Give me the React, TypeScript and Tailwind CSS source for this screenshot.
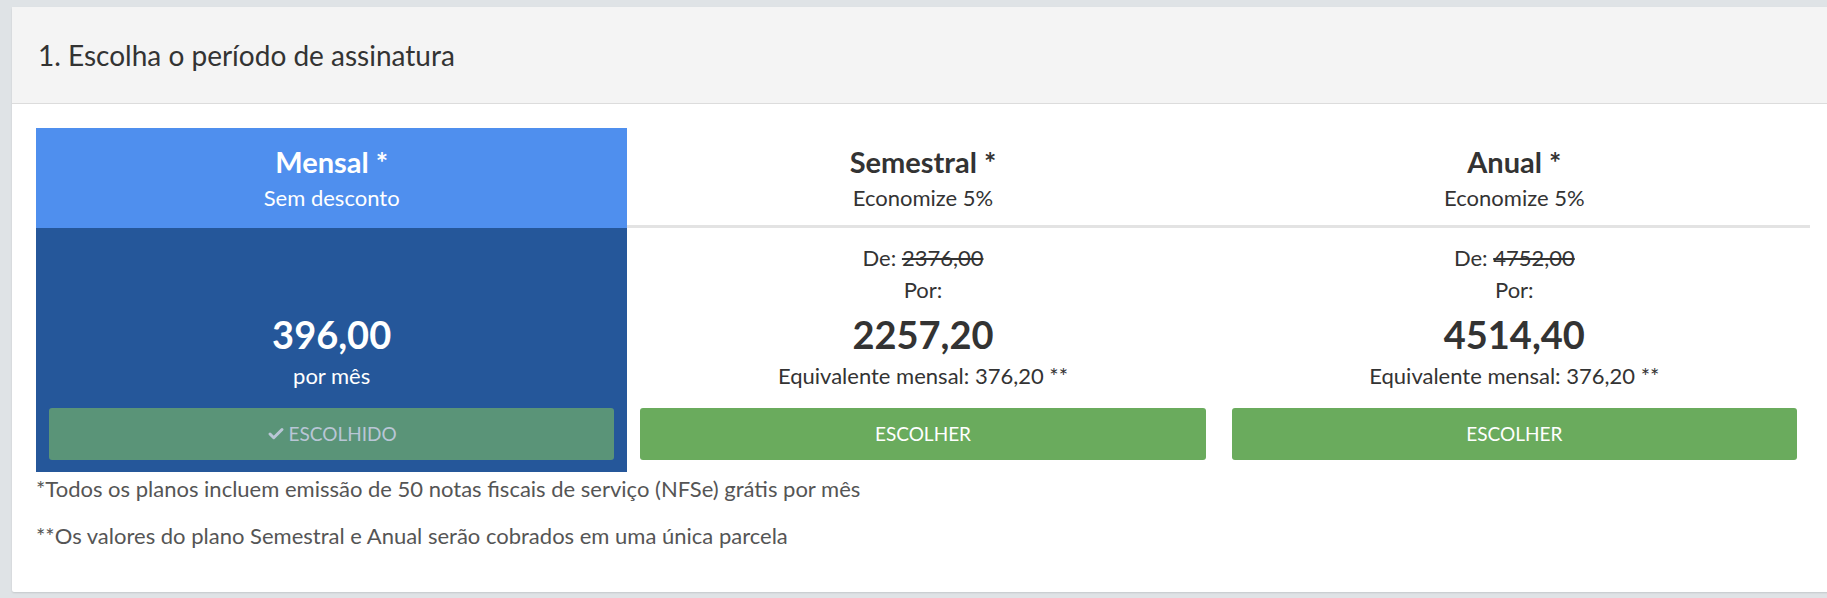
import { Check } from "lucide-react";

type Plan = {
  name: string;
  subtitle: string;
  from?: string;
  price: string;
  note: string;
  chosen?: boolean;
};

const plans: Plan[] = [
  { name: "Mensal *", subtitle: "Sem desconto", price: "396,00", note: "por mês", chosen: true },
  {
    name: "Semestral *",
    subtitle: "Economize 5%",
    from: "2376,00",
    price: "2257,20",
    note: "Equivalente mensal: 376,20 **",
  },
  {
    name: "Anual *",
    subtitle: "Economize 5%",
    from: "4752,00",
    price: "4514,40",
    note: "Equivalente mensal: 376,20 **",
  },
];

function PlanCard({ plan }: { plan: Plan }) {
  const chosen = plan.chosen;
  return (
    <div className={chosen ? "bg-[#25579a] text-white" : "text-[#333]"}>
      <div
        className={
          chosen
            ? "h-[100px] bg-[#4f8fee] pt-[16px] text-center"
            : "h-[100px] border-b-[3px] border-[#e3e3e3] pt-[16px] text-center"
        }
      >
        <div className="text-[29px] font-bold leading-[36px]">{plan.name}</div>
        <div className="text-[22px] leading-[36px]">{plan.subtitle}</div>
      </div>
      <div className="px-[13px] pt-[14px] pb-[12px] text-center">
        {plan.from ? (
          <>
            <div className="text-[22px] leading-[32px]">
              De: <span className="line-through">{plan.from}</span>
            </div>
            <div className="text-[22px] leading-[32px]">Por:</div>
          </>
        ) : (
          <div className="h-[64px]" />
        )}
        <div className="text-[38px] font-bold leading-[56px]">{plan.price}</div>
        <div className="text-[22px] leading-[28px]">{plan.note}</div>
        <button
          className={
            chosen
              ? "mt-[18px] flex h-[52px] w-full items-center justify-center gap-1 rounded-[3px] bg-[#5a9478] text-[19px] text-[#b9c6d6]"
              : "mt-[18px] flex h-[52px] w-full items-center justify-center rounded-[3px] bg-[#6aab5d] text-[19px] text-white"
          }
        >
          {chosen && <Check className="h-[18px] w-[18px]" strokeWidth={4} />}
          {chosen ? "ESCOLHIDO" : "ESCOLHER"}
        </button>
      </div>
    </div>
  );
}

export default function App() {
  return (
    <div
      className="h-[598px] w-[1827px] overflow-hidden bg-[#dfe3e6] pt-[7px]"
      style={{ fontFamily: "Lato, 'Open Sans', sans-serif" }}
    >
      <div className="ml-[12px] w-[1822px] rounded-[2px] bg-white shadow-[0_1px_2px_rgba(0,0,0,0.12)]">
        <div className="flex h-[97px] items-center border-b border-[#dcdcdc] bg-[#f4f4f4] px-[26px]">
          <h2 className="text-[28px] text-[#333]">1. Escolha o período de assinatura</h2>
        </div>
        <div className="px-[24px] pt-[24px] pb-[41px]">
          <div className="grid w-[1774px] grid-cols-3">
            {plans.map((p) => (
              <PlanCard key={p.name} plan={p} />
            ))}
          </div>
          <p className="mt-[2px] text-[22px] leading-[30px] text-[#555]">
            *Todos os planos incluem emissão de 50 notas fiscais de serviço (NFSe) grátis por mês
          </p>
          <p className="mt-[17px] text-[22px] leading-[30px] text-[#555]">
            **Os valores do plano Semestral e Anual serão cobrados em uma única parcela
          </p>
        </div>
      </div>
    </div>
  );
}
